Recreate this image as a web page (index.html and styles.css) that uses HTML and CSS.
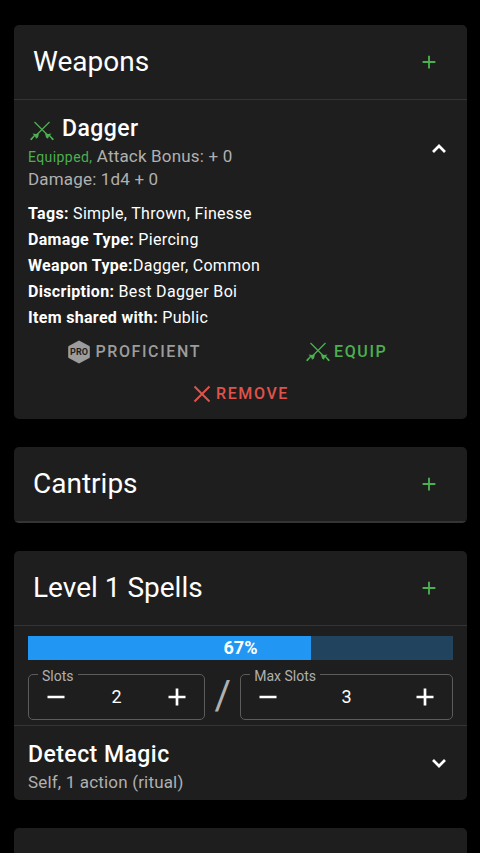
FILE: index.html
```html
<!DOCTYPE html>
<html lang="en">
<head>
<meta charset="utf-8">
<meta name="viewport" content="width=device-width, initial-scale=1">
<title>Character sheet</title>
<link rel="stylesheet" href="styles.css">
</head>
<body>
<svg class="defs" aria-hidden="true">
  <symbol id="plus" viewBox="0 0 24 24"><path d="M12 3.500v17M3.500 12h17" fill="none" stroke="currentColor" stroke-width="2.500"/></symbol>
  <symbol id="minus" viewBox="0 0 24 24"><path d="M3.500 12h17" fill="none" stroke="currentColor" stroke-width="2.700"/></symbol>
  <symbol id="plus-bold" viewBox="0 0 24 24"><path d="M12 3.500v17M3.500 12h17" fill="none" stroke="currentColor" stroke-width="2.700"/></symbol>
  <symbol id="swords" viewBox="0 0 24 20">
    <g fill="none" stroke="currentColor" stroke-width="1.300">
      <path d="M4.500 1 18.500 15M19.500 1 5.500 15"/>
      <path d="M5 14 .8 18.700M19 14l4.200 4.700" stroke-width="1.500"/>
    </g>
    <path d="M2.500 12.500 6 13l3-.8-1 4.300-2 1.200-.8-2.200zM21.500 12.500 18 13l-3-.8 1 4.300 2 1.200.8-2.200z" fill="currentColor"/>
    <path d="m.3 18 1.700-1.600 1 1-1.800 1.900zM23.700 18 22 16.400l-1 1 1.800 1.900z" fill="currentColor"/>
  </symbol>
</svg>
<main class="sheet">
  <section class="card">
    <header class="card-head">
      <h2>Weapons</h2>
      <button class="icon-btn add" aria-label="Add weapon"><svg width="18" height="18"><use href="#plus"/></svg></button>
    </header>
    <div class="item">
      <div class="item-text">
        <h3><svg class="swords" width="24" height="20"><use href="#swords"/></svg>Dagger</h3>
        <p><span class="equipped">Equipped,</span> Attack Bonus: + 0</p>
        <p>Damage: 1d4 + 0</p>
      </div>
      <button class="icon-btn toggle" aria-label="Collapse Dagger"><svg width="16" height="16" viewBox="0 0 16 16"><path d="m2 11 6-6 6 6" fill="none" stroke="currentColor" stroke-width="2.700"/></svg></button>
    </div>
    <div class="details">
      <p><b>Tags:</b> Simple, Thrown, Finesse</p>
      <p><b>Damage Type:</b> Piercing</p>
      <p><b>Weapon Type:</b>Dagger, Common</p>
      <p><b>Discription:</b> Best Dagger Boi</p>
      <p><b>Item shared with:</b> Public</p>
    </div>
    <div class="actions">
      <button class="action muted"><svg width="24" height="24" viewBox="0 0 24 24"><path d="M12 .5 22.300 6q.5.300.5 1v10q0 .7-.5 1L12 23.500 1.700 18q-.5-.3-.5-1V7q0-.7.5-1z" fill="currentColor"/><text class="badge" x="12" y="15" text-anchor="middle">PRO</text></svg>Proficient</button>
      <button class="action green"><svg width="24" height="20"><use href="#swords"/></svg>Equip</button>
      <button class="action red wide"><svg width="20" height="20" viewBox="0 0 20 20"><path d="m2.500 2.500 15 15m0-15-15 15" fill="none" stroke="currentColor" stroke-width="2"/></svg>Remove</button>
    </div>
  </section>

  <section class="card">
    <header class="card-head empty">
      <h2>Cantrips</h2>
      <button class="icon-btn add" aria-label="Add cantrip"><svg width="18" height="18"><use href="#plus"/></svg></button>
    </header>
  </section>

  <section class="card">
    <header class="card-head">
      <h2>Level 1 Spells</h2>
      <button class="icon-btn add" aria-label="Add level 1 spell"><svg width="18" height="18"><use href="#plus"/></svg></button>
    </header>
    <div class="slots">
      <div class="meter" role="progressbar" aria-label="Slots left" aria-valuenow="67" aria-valuemin="0" aria-valuemax="100">
        <div class="fill" style="width:66.67%"></div>
        <strong>67%</strong>
      </div>
      <div class="fields">
        <fieldset class="field">
          <legend><label for="slots">Slots</label></legend>
          <div class="stepper">
            <button class="icon-btn" aria-label="Fewer slots"><svg width="24" height="24"><use href="#minus"/></svg></button>
            <input id="slots" type="text" inputmode="numeric" value="2">
            <button class="icon-btn" aria-label="More slots"><svg width="24" height="24"><use href="#plus-bold"/></svg></button>
          </div>
        </fieldset>
        <span class="slash">/</span>
        <fieldset class="field">
          <legend><label for="max-slots">Max Slots</label></legend>
          <div class="stepper">
            <button class="icon-btn" aria-label="Lower max slots"><svg width="24" height="24"><use href="#minus"/></svg></button>
            <input id="max-slots" type="text" inputmode="numeric" value="3">
            <button class="icon-btn" aria-label="Raise max slots"><svg width="24" height="24"><use href="#plus-bold"/></svg></button>
          </div>
        </fieldset>
      </div>
    </div>
    <div class="item spell">
      <div class="item-text">
        <h3>Detect Magic</h3>
        <p>Self, 1 action (ritual)</p>
      </div>
      <button class="icon-btn toggle" aria-label="Expand Detect Magic"><svg width="16" height="16" viewBox="0 0 16 16"><path d="m2 5 6 6 6-6" fill="none" stroke="currentColor" stroke-width="2.700"/></svg></button>
    </div>
  </section>

  <section class="card next"></section>
</main>
</body>
</html>
```
FILE: styles.css
```css
* { box-sizing: border-box; }

body {
  margin: 0;
  background: #000;
  color: #fff;
  font: 16px/26px Roboto, sans-serif;
}

h2, h3, p { margin: 0; }

button, input { font: inherit; color: inherit; }

button {
  padding: 0;
  border: 0;
  background: none;
  cursor: pointer;
}

svg { display: block; flex: none; }

.defs { position: absolute; width: 0; height: 0; }

.sheet {
  display: flex;
  flex-direction: column;
  gap: 28px;
  min-height: 100vh;
  padding: 25px 13px 0 14px;
}

.card {
  overflow: hidden;
  border-radius: 5px;
  background: #1e1e1e;
}

.next { flex: 1; border-radius: 5px 5px 0 0; }

.card-head {
  display: flex;
  align-items: center;
  justify-content: space-between;
  height: 75px;
  padding: 0 29px 0 19px;
  border-bottom: 1px solid #343434;
}

.card-head.empty { height: 76px; border-bottom: 2px solid #343434; }

h2 { font-size: 28px; line-height: 36px; font-weight: 400; }

.icon-btn { display: flex; align-items: center; justify-content: center; }

.toggle { margin-bottom: 6px; }

.add, .green, .swords, .equipped { color: #4caf50; }

.item {
  display: flex;
  align-items: center;
  justify-content: space-between;
  padding: 13px 20px 0 14px;
}

.item-text {
  color: #b0b0b0;
  font-size: 17px;
  line-height: 22px;
  letter-spacing: 0.01em;
}

h3 {
  display: flex;
  align-items: center;
  gap: 6px;
  color: #fff;
  font-size: 23px;
  line-height: 32px;
  font-weight: 500;
  letter-spacing: 0.02em;
}

.swords { margin: 4px 2px 0 2px; }

.equipped { font-size: 14px; letter-spacing: 0.03em; }

.details { padding: 11px 14px 0; letter-spacing: 0.02em; }

b { font-weight: 700; }

.actions {
  display: grid;
  grid-template-columns: 1fr 1fr;
  padding: 0 14px 4px;
}

.action {
  display: flex;
  align-items: center;
  justify-content: center;
  gap: 4px;
  height: 42px;
  font-size: 16px;
  font-weight: 500;
  letter-spacing: 0.1em;
  text-transform: uppercase;
}

.wide { grid-column: 1 / -1; }
.muted { color: #9c9c9c; }
.red { color: #e0524a; }

.badge {
  fill: #1e1e1e;
  font-size: 9px;
  font-weight: 700;
  letter-spacing: 0;
}

.slots {
  padding: 10px 14px 5px;
  border-bottom: 1px solid #343434;
}

.meter {
  display: grid;
  height: 24px;
  background: #21435d;
}

.meter > * { grid-area: 1 / 1; }
.fill { background: #2196f3; }

.meter strong {
  font-size: 18px;
  line-height: 24px;
  font-weight: 700;
  text-align: center;
}

.fields {
  display: grid;
  grid-template-columns: 5fr 35px 6fr;
  align-items: end;
  margin-top: 5px;
}

.field {
  min-width: 0;
  margin: 0;
  padding: 0 15px;
  border: 1px solid #5c5c5c;
  border-radius: 5px;
}

legend {
  margin-left: -6px;
  padding: 4px 4px 0;
  color: #b0b0b0;
  font-size: 14px;
  line-height: 14px;
}

legend label { display: block; }

.stepper { display: flex; align-items: center; height: 36px; padding-bottom: 8px; }

.stepper input {
  flex: 1;
  width: 0;
  padding: 0;
  border: 0;
  background: none;
  font-size: 18px;
  text-align: center;
}

.slash {
  color: #b0b0b0;
  font-size: 40px;
  line-height: 48px;
  text-align: center;
}

.spell { padding: 13px 20px 7px 14px; }
```
